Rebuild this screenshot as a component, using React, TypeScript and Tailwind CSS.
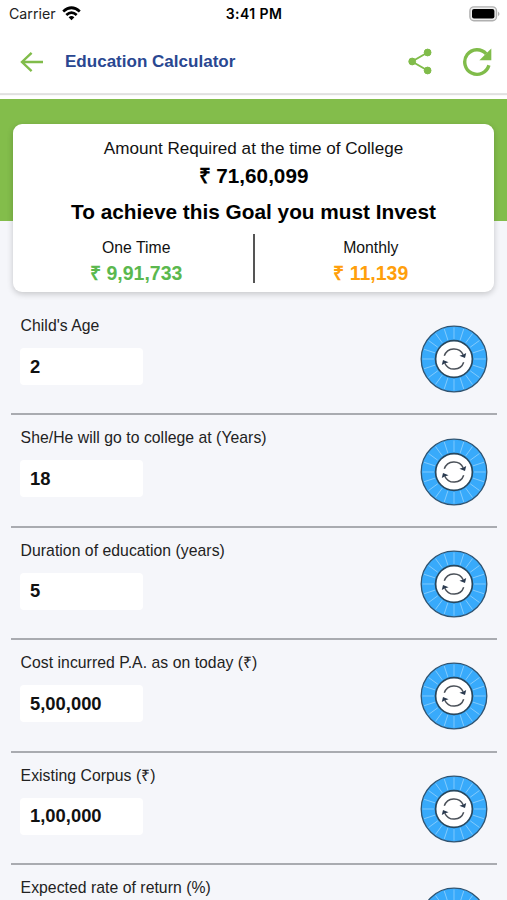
type FieldProps = { label: string; value?: string };

const fields: FieldProps[] = [
  { label: "Child's Age", value: '2' },
  { label: 'She/He will go to college at (Years)', value: '18' },
  { label: 'Duration of education (years)', value: '5' },
  { label: 'Cost incurred P.A. as on today (₹)', value: '5,00,000' },
  { label: 'Existing Corpus (₹)', value: '1,00,000' },
  { label: 'Expected rate of return (%)' },
];

const spokes = Array.from({ length: 20 }, (_, i) => i * 18);

function StatusBar() {
  return (
    <div className="grid h-7 grid-cols-3 items-center pr-[6px] pl-[9px] font-['Inter','Liberation_Sans',sans-serif] text-black">
      <div className="flex items-center gap-[6px]">
        <span className="text-[14.2px] leading-7 text-[#222]">Carrier</span>
        <svg width="19" height="15" viewBox="0 0 19 15" className="-mt-[2px]" fill="none" stroke="#000" strokeWidth="2.7">
          <path d="M1.2 5.4 Q9.5 -1.9 17.8 5.4" />
          <path d="M4.3 8.9 Q9.5 4.2 14.7 8.9" />
          <path d="M9.5 14.2 L6.6 11.3 Q9.5 8.9 12.4 11.3 Z" fill="#000" stroke="none" />
        </svg>
      </div>
      <span className="pr-[2px] text-center text-[14px] leading-7 font-semibold tracking-[0.4px] whitespace-nowrap">3:41 PM</span>
      <svg width="32" height="16" viewBox="0 0 32 16" className="-mt-[1px] justify-self-end">
        <rect x="0.9" y="0.9" width="26.6" height="13.8" rx="4" fill="#eee" stroke="#b0b0b0" strokeWidth="1.4" />
        <rect x="3" y="3" width="22.4" height="9.6" rx="2" fill="#000" />
        <path d="M29 5.4 Q32 7.8 29 10.2 Z" fill="#b0b0b0" />
      </svg>
    </div>
  );
}

function Header() {
  return (
    <header className="flex h-[66px] items-center border-b border-[#e4e4e4] pt-[2px] pr-[15.5px] pl-5 shadow-[0_1px_1px_rgba(0,0,0,0.12)]">
      <svg width="24" height="22" viewBox="0 0 24 22" fill="none" stroke="#80bc4a" strokeWidth="2.4">
        <path d="M23 11H2M11.6 1.8L2 11L11.6 20.2" />
      </svg>
      <h1 className="ml-[21px] flex-1 text-[17.05px] font-bold text-[#294791]">Education Calculator</h1>
      <svg width="24" height="27" viewBox="0 0 24 27" fill="#80bc4a" stroke="#80bc4a">
        <path d="M19.6 4.5L4 13.5L19.6 22.5" fill="none" strokeWidth="1.9" />
        <circle cx="19.6" cy="4.5" r="3.4" />
        <circle cx="4.2" cy="13.5" r="3.4" />
        <circle cx="19.6" cy="22.5" r="3.4" />
      </svg>
      <svg width="30" height="30" viewBox="0 0 30 30" className="ml-[29.5px]" fill="none" stroke="#80bc4a" strokeWidth="3.4">
        <path d="M26.9 18.3A12.3 12.3 0 1 1 24.2 6.8" />
        <path d="M29.3 1.6V13.2H17.4Z" fill="#80bc4a" stroke="none" />
      </svg>
    </header>
  );
}

function Summary() {
  return (
    <section className="mx-[13px] h-[168.5px] rounded-[9px] bg-white pt-[14px] text-center text-black shadow-[0_2px_6px_rgba(0,0,0,0.2)]">
      <p className="text-[17.1px] leading-[22px] text-[#111]">Amount Required at the time of College</p>
      <p className="mt-[4.5px] text-[20.7px] leading-6 font-bold">₹ 71,60,099</p>
      <p className="mt-[12px] text-[20.8px] leading-6 font-bold">To achieve this Goal you must Invest</p>
      <div className="mt-[9.5px] flex">
        <div className="flex-1 pl-[7px]">
          <p className="mt-[4px] text-[15.75px] leading-5 text-[#111]">One Time</p>
          <p className="mt-[3px] text-[19.5px] leading-6 font-bold text-[#5bb84e]">₹ 9,91,733</p>
        </div>
        <div className="h-[49px] w-[2px] bg-[#555]" />
        <div className="flex-1 pr-[7px]">
          <p className="mt-[4px] text-[15.75px] leading-5 text-[#111]">Monthly</p>
          <p className="mt-[3px] text-[19.5px] leading-6 font-bold text-[#ff9f0c]">₹ 11,139</p>
        </div>
      </div>
    </section>
  );
}

function Dial() {
  return (
    <svg width="68" height="68" viewBox="-34 -34 68 68" className="mt-[22.2px] shrink-0">
      <circle r="32.8" fill="#38aafb" stroke="#2f5472" strokeWidth="1.3" />
      {spokes.map((angle) => (
        <path key={angle} d="M0 -20V-31.5" stroke="#83cbfd" strokeWidth="0.9" transform={`rotate(${angle})`} />
      ))}
      <circle r="18.4" fill="#fff" stroke="#28485f" strokeWidth="1.7" />
      <g fill="none" stroke="#4a5058" strokeWidth="1.5">
        <path d="M-9.7 -3.2A10.2 10.2 0 0 1 9.2 -4.2" />
        <path d="M9.7 3.2A10.2 10.2 0 0 1 -9.2 4.2" />
      </g>
      <path d="M5.4 -3.2L11 -1L12.2 -6L9.4 -4.6Z" fill="#2b3b50" />
      <path d="M-5.4 3.2L-11 1L-12.2 6L-9.4 4.6Z" fill="#2b3b50" />
    </svg>
  );
}

function Field({ label, value }: FieldProps) {
  return (
    <div className="flex h-[112.4px] shrink-0 items-start justify-between border-b-2 border-[#a9abb0] pr-[9px] pl-[9px]">
      <div>
        <p className="mt-[13px] pl-[0.6px] text-[15.75px] leading-5 tracking-[0.04px] text-[#222]">{label}</p>
        {value && (
          <div className="mt-[12px] flex h-[37px] w-[123px] items-center rounded-[4px] bg-white pl-[10px] text-[18.4px] font-bold text-[#111]">
            {value}
          </div>
        )}
      </div>
      <Dial />
    </div>
  );
}

export default function App() {
  return (
    <div className="flex h-[900px] w-[507px] flex-col overflow-hidden bg-white font-['Liberation_Sans',Arial,sans-serif]">
      <StatusBar />
      <Header />
      <main className="mt-[4.5px] min-h-0 flex-1 overflow-hidden bg-[linear-gradient(#83bd4b_122px,#f5f6fa_122px)]">
        <div className="pt-[25px]">
          <Summary />
        </div>
        <div className="mt-[11px] mr-[10px] ml-[11px]">
          {fields.map((field) => (
            <Field key={field.label} {...field} />
          ))}
        </div>
      </main>
    </div>
  );
}
